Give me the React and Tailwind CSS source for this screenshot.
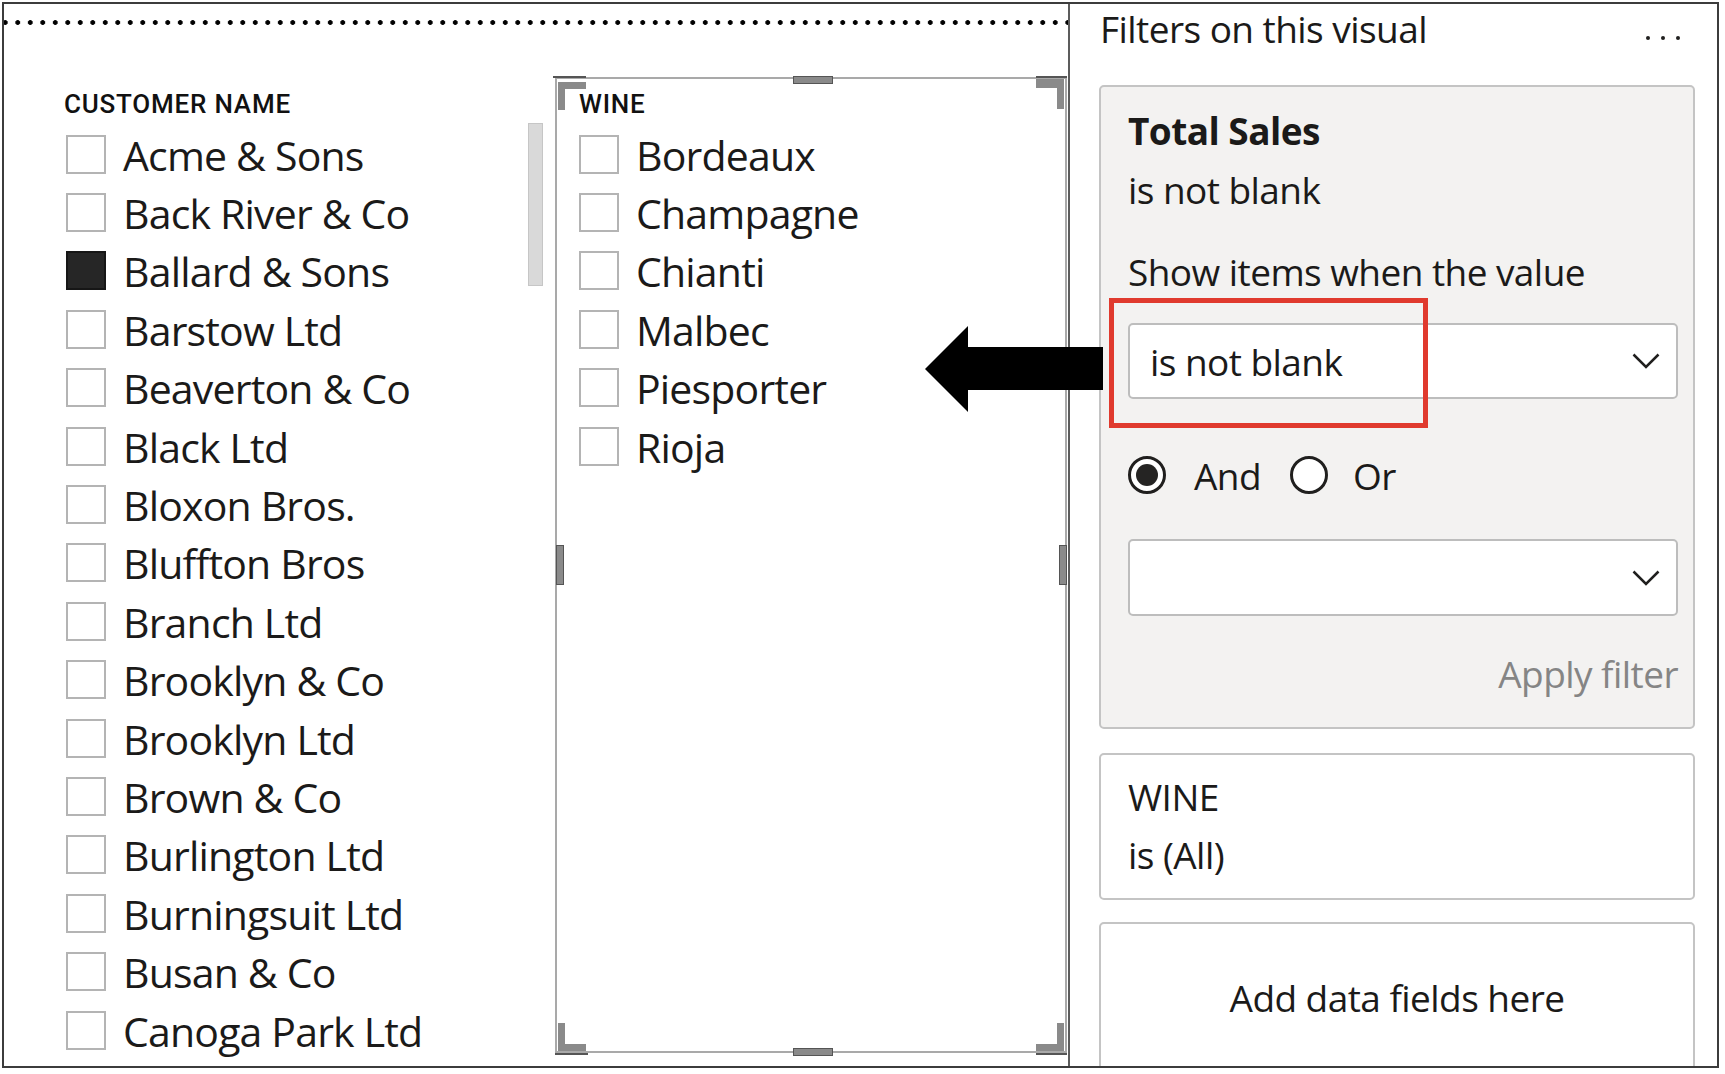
import clsx from "clsx";

const customers = [
  "Acme & Sons",
  "Back River & Co",
  "Ballard & Sons",
  "Barstow Ltd",
  "Beaverton & Co",
  "Black Ltd",
  "Bloxon Bros.",
  "Bluffton Bros",
  "Branch Ltd",
  "Brooklyn & Co",
  "Brooklyn Ltd",
  "Brown & Co",
  "Burlington Ltd",
  "Burningsuit Ltd",
  "Busan & Co",
  "Canoga Park Ltd",
];

const wines = ["Bordeaux", "Champagne", "Chianti", "Malbec", "Piesporter", "Rioja"];

function Item({ label, checked }) {
  return (
    <div className="flex h-[58.4px] items-center gap-[17px]">
      <span
        className={clsx(
          "h-[39px] w-[40px] shrink-0 border-2",
          checked ? "border-[#161616] bg-[#262626]" : "border-[#b4b4b4] bg-white"
        )}
      />
      <span className="whitespace-nowrap pt-[1px] text-[41px] leading-[58px] tracking-[-0.02em]">{label}</span>
    </div>
  );
}

function Header({ children }) {
  return (
    <div className="h-[46px] pt-[10px] font-['Roboto',sans-serif] text-[26px] font-medium leading-[30px] tracking-[0.03em] text-[#111]">
      {children}
    </div>
  );
}

function Chevron() {
  return (
    <svg width="28" height="16" viewBox="0 0 28 16" fill="none" stroke="#201f1e" strokeWidth="2.5">
      <polyline points="1.5,1.5 14,14 26.5,1.5" />
    </svg>
  );
}

function Dropdown({ value, h }) {
  return (
    <div
      className={clsx(
        "flex items-center justify-between rounded-[5px] border-2 border-[#bdbdbd] bg-white pl-[20px] pr-[16px]",
        h
      )}
    >
      <span className="leading-[49px]">{value}</span>
      <Chevron />
    </div>
  );
}

function Radio({ on }) {
  return (
    <span className="flex h-[38px] w-[38px] items-center justify-center rounded-full border-[3px] border-[#201f1e] bg-white">
      {on && <span className="h-[22px] w-[22px] rounded-full bg-[#252423]" />}
    </span>
  );
}

export default function App() {
  return (
    <div className="relative h-[1074px] w-[1725px] overflow-hidden bg-white font-['Open_Sans',sans-serif] text-[#1b1a19]">
      <div className="ml-[2px] mt-[2px] flex h-[1066px] w-[1717px] border-2 border-[#3c3c3c]">
        {/* report canvas */}
        <div className="h-full w-[1066px] shrink-0 overflow-hidden border-r-2 border-[#5c5c5c]">
          <div className="-ml-[5px] mt-[16px] h-[5px] w-[1070px] bg-[radial-gradient(circle,#000_2.1px,transparent_2.6px)] bg-[length:12.5px_5px]" />

          <div className="mt-[52px] flex">
            {/* customer slicer */}
            <div className="flex h-[976px] w-[551px] border-2 border-transparent">
              <div className="flex-1 pl-[60px]">
                <div className="-ml-[2px]">
                  <Header>CUSTOMER NAME</Header>
                </div>
                {customers.map((c, i) => (
                  <Item key={c} label={c} checked={i === 2} />
                ))}
              </div>
              <div className="mr-[10px] mt-[44px] h-[163px] w-[15px] border border-[#c6c6c6] bg-[#d9d9d9]" />
            </div>

            {/* wine slicer (selected) */}
            <div className="relative h-[976px] w-[512px] border-2 border-[#a9a9a9]">
              <div className="pl-[22px]">
                <Header>WINE</Header>
                {wines.map((w) => (
                  <Item key={w} label={w} />
                ))}
              </div>

              {/* selection handles */}
              <div className="absolute -left-[4px] -top-[3px] h-[2px] w-[33px] bg-[#555]" />
              <div className="absolute left-[1px] top-[3px] h-[28px] w-[28px] border-l-[7px] border-t-[7px] border-[#8a8a8a]" />
              <div className="absolute -right-[2px] -top-[3px] h-[2px] w-[31px] bg-[#555]" />
              <div className="absolute right-[1px] top-[0px] h-[30px] w-[28px] border-r-[7px] border-t-[9px] border-[#8a8a8a]" />
              <div className="absolute -bottom-[4px] left-[-2px] h-[2px] w-[33px] bg-[#555]" />
              <div className="absolute bottom-[0px] left-[1px] h-[28px] w-[28px] border-b-[7px] border-l-[7px] border-[#8a8a8a]" />
              <div className="absolute -bottom-[4px] -right-[2px] h-[2px] w-[31px] bg-[#555]" />
              <div className="absolute bottom-[0px] right-[1px] h-[28px] w-[28px] border-b-[7px] border-r-[7px] border-[#8a8a8a]" />

              <div className="absolute left-[236px] -top-[3px] h-[8px] w-[40px] border border-[#555] bg-[#8a8a8a]" />
              <div className="absolute -bottom-[5px] left-[236px] h-[8px] w-[40px] border border-[#555] bg-[#8a8a8a]" />
              <div className="absolute -left-[1px] top-[466px] h-[40px] w-[8px] border border-[#555] bg-[#8a8a8a]" />
              <div className="absolute -right-[2px] top-[466px] h-[40px] w-[8px] border border-[#555] bg-[#8a8a8a]" />
            </div>
          </div>
        </div>

        {/* filter pane */}
        <div className="flex-1 overflow-hidden text-[37px] tracking-[-0.015em]">
          <div className="flex h-[49px] items-start justify-between pl-[30px] pr-[37px]">
            <span className="leading-[49px]">Filters on this visual</span>
            <div className="mt-[32px] flex gap-[11px]">
              <span className="h-[4px] w-[4px] rounded-full bg-[#201f1e]" />
              <span className="h-[4px] w-[4px] rounded-full bg-[#201f1e]" />
              <span className="h-[4px] w-[4px] rounded-full bg-[#201f1e]" />
            </div>
          </div>

          <div className="ml-[29px] mr-[22px] mt-[32px] rounded-[5px] border-2 border-[#c4c4c4] bg-[#f3f2f1] pb-[29px] pl-[27px] pr-[15px] pt-[19px]">
            <div className="font-bold leading-[49px]">Total Sales</div>
            <div className="mt-[10px] leading-[49px]">is not blank</div>
            <div className="mt-[33px] leading-[49px]">Show items when the value</div>
            <div className="mt-[27px]">
              <Dropdown value="is not blank" h="h-[76px]" />
            </div>
            <div className="mt-[50px] flex h-[52px] items-center">
              <Radio on />
              <span className="ml-[28px] leading-[49px]">And</span>
              <span className="ml-[29px]">
                <Radio />
              </span>
              <span className="ml-[25px] leading-[49px]">Or</span>
            </div>
            <div className="mt-[38px]">
              <Dropdown value="" h="h-[77px]" />
            </div>
            <div className="mt-[33px] text-right leading-[49px] text-[#858585]">Apply filter</div>
          </div>

          <div className="ml-[29px] mr-[22px] mt-[24px] h-[147px] rounded-[5px] border-2 border-[#c4c4c4] bg-white pl-[27px] pt-[17px]">
            <div className="leading-[49px]">WINE</div>
            <div className="mt-[9px] leading-[49px]">is (All)</div>
          </div>

          <div className="ml-[29px] mr-[22px] mt-[22px] h-[220px] rounded-[5px] border-2 border-[#c4c4c4] bg-white pt-[49px] text-center">
            <div className="leading-[49px]">Add data fields here</div>
          </div>
        </div>
      </div>

      {/* callout overlays */}
      <svg className="absolute left-[925px] top-[326px]" width="178" height="86" viewBox="0 0 178 86">
        <polygon points="0,43 43,0 43,21 178,21 178,64 43,64 43,86" fill="#000" />
      </svg>
      <div className="absolute left-[1109px] top-[298px] h-[130px] w-[319px] border-[5px] border-[#e03a2e]" />
    </div>
  );
}
